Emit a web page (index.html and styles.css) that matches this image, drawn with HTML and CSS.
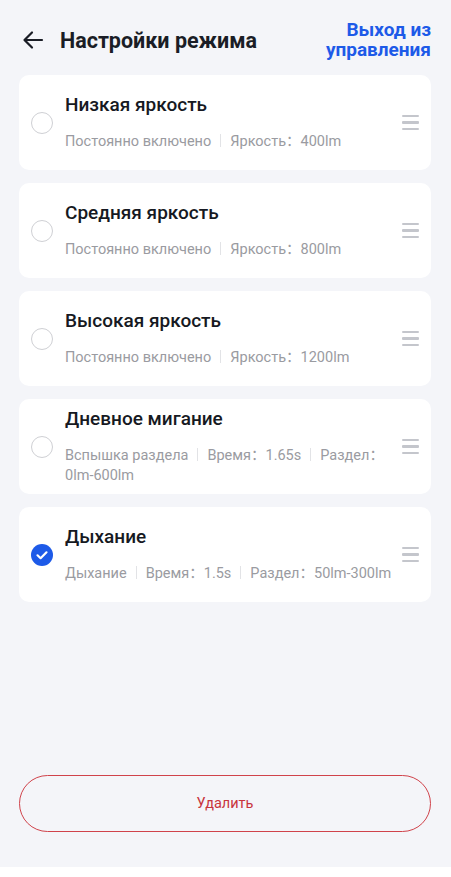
FILE: index.html
```html
<!DOCTYPE html>
<html lang="ru">
<head>
  <meta charset="UTF-8" />
  <meta name="viewport" content="width=device-width, initial-scale=1.0"/>
  <title>Настройки режима</title>
  <link rel="stylesheet" href="styles.css">
</head>
<body>
  <div class="page">
    <div class="header">
      <button class="back" aria-label="Назад">
        <svg width="22" height="22" viewBox="0 0 22 22" fill="none" stroke="#1a1d26" stroke-width="2.2" stroke-linecap="round" stroke-linejoin="round">
          <path d="M20 11H3"/>
          <path d="M10 3.5L2.5 11L10 18.5"/>
        </svg>
      </button>
      <div class="title">Настройки режима</div>
      <a class="exit">Выход из<br>управления</a>
    </div>

    <div class="list">
      <div class="card">
        <span class="radio"></span>
        <div class="info">
          <div class="name">Низкая яркость</div>
          <div class="meta">Постоянно включено<span class="sep"></span>Яркость：400lm</div>
        </div>
        <span class="handle"><i></i><i></i><i></i></span>
      </div>

      <div class="card">
        <span class="radio"></span>
        <div class="info">
          <div class="name">Средняя яркость</div>
          <div class="meta">Постоянно включено<span class="sep"></span>Яркость：800lm</div>
        </div>
        <span class="handle"><i></i><i></i><i></i></span>
      </div>

      <div class="card">
        <span class="radio"></span>
        <div class="info">
          <div class="name">Высокая яркость</div>
          <div class="meta">Постоянно включено<span class="sep"></span>Яркость：1200lm</div>
        </div>
        <span class="handle"><i></i><i></i><i></i></span>
      </div>

      <div class="card">
        <span class="radio"></span>
        <div class="info">
          <div class="name">Дневное мигание</div>
          <div class="meta">Вспышка раздела<span class="sep"></span>Время：1.65s<span class="sep"></span>Раздел：0lm-600lm</div>
        </div>
        <span class="handle"><i></i><i></i><i></i></span>
      </div>

      <div class="card">
        <span class="radio checked">
          <svg width="22" height="22" viewBox="0 0 22 22" fill="none" stroke="#fff" stroke-width="2.2" stroke-linecap="round" stroke-linejoin="round">
            <path d="M6.5 11.3L9.6 14.2L15.5 8.3"/>
          </svg>
        </span>
        <div class="info">
          <div class="name">Дыхание</div>
          <div class="meta">Дыхание<span class="sep"></span>Время：1.5s<span class="sep"></span>Раздел：50lm-300lm</div>
        </div>
        <span class="handle"><i></i><i></i><i></i></span>
      </div>
    </div>

    <button class="delete">Удалить</button>
  </div>
</body>
</html>
```

FILE: styles.css
```css
* { box-sizing: border-box; }
body {
  margin: 0;
  background: #fff;
  font-family: Roboto, "Noto Sans CJK SC", sans-serif;
  color: #1a1d26;
}
.page {
  min-height: 867px;
  background: #f4f5f9;
  display: flex;
  flex-direction: column;
  padding: 0 20px 35px 19px;
}
.header {
  display: flex;
  align-items: center;
  height: 40px;
  margin: 20px 0 15px;
}
.back {
  border: none;
  background: none;
  padding: 0;
  margin: 0 16px 0 3px;
  width: 22px;
  height: 22px;
  display: flex;
}
.title {
  flex: 1;
  font-size: 21.5px;
  font-weight: 700;
}
.exit {
  color: #1d5ae8;
  font-size: 19px;
  font-weight: 700;
  line-height: 20px;
  text-align: right;
}
.list {
  display: flex;
  flex-direction: column;
  gap: 13px;
}
.card {
  background: #fff;
  border-radius: 10px;
  min-height: 95px;
  padding: 8px 12px;
  display: flex;
  align-items: center;
}
.radio {
  flex: none;
  width: 22px;
  height: 22px;
  border-radius: 50%;
  border: 1.5px solid #cfd0d4;
  margin-right: 12px;
  display: flex;
}
.radio.checked {
  border: none;
  background: #1d5ae8;
}
.info {
  flex: 1;
  min-width: 0;
}
.name {
  font-size: 19px;
  font-weight: 500;
  line-height: 24px;
  margin-bottom: 15px;
  color: #161922;
}
.meta {
  font-size: 14.5px;
  line-height: 20px;
  color: #9a9ba1;
}
.sep {
  display: inline-block;
  width: 1px;
  height: 13px;
  background: #e2e3e6;
  margin: 0 9px;
  vertical-align: -1px;
}
.handle {
  flex: none;
  width: 17px;
  display: flex;
  flex-direction: column;
  gap: 4px;
  margin-left: 6px;
}
.handle i {
  display: block;
  height: 2.2px;
  background: #c4c6cc;
  border-radius: 1px;
}
.delete {
  margin-top: auto;
  height: 57px;
  border: 1.5px solid #d0434b;
  border-radius: 29px;
  background: none;
  color: #c8343c;
  font-family: inherit;
  font-size: 14.5px;
}
```
